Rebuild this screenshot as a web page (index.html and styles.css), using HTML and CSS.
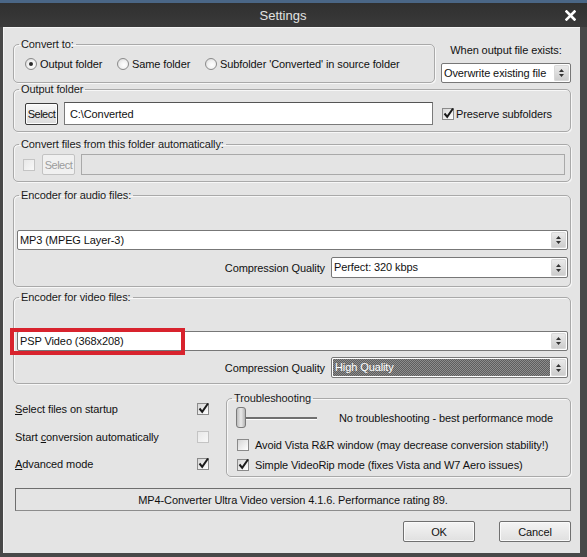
FILE: index.html
```html
<!DOCTYPE html>
<html>
<head>
<meta charset="utf-8">
<title>Settings</title>
<link rel="stylesheet" href="styles.css">
</head>
<body>
<div class="desk">
  <div class="window">
    <div class="titlebar">
      <span class="title">Settings</span>
      <span class="close"><svg width="11" height="11" viewBox="0 0 11 11"><path d="M1.5 1.5 L9.5 9.5 M9.5 1.5 L1.5 9.5" stroke="#fff" stroke-width="2.6" stroke-linecap="square"/></svg></span>
    </div>
    <div class="client">
      <div class="row-top">
        <fieldset class="group g-convert">
          <legend>Convert to:</legend>
          <div class="radios">
            <span class="opt w1"><span class="radio on"></span>Output folder</span>
            <span class="opt w2"><span class="radio"></span>Same folder</span>
            <span class="opt"><span class="radio"></span>Subfolder 'Converted' in source folder</span>
          </div>
        </fieldset>
        <div class="exists">
          <div class="exists-label">When output file exists:</div>
          <div class="combo c-exists"><span class="val">Overwrite existing file</span><span class="arrow"><svg width="7" height="10" viewBox="0 0 7 10"><path d="M3.5 1 L6 4 L1 4 Z M1 6 L6 6 L3.5 9 Z" fill="#333"/></svg></span></div>
        </div>
      </div>

      <fieldset class="group g-output">
        <legend>Output folder</legend>
        <div class="out-row">
          <span class="btn btn-select">Select</span>
          <span class="textbox tb-out">C:\Converted</span>
          <span class="cb on"><svg width="13" height="13" viewBox="0 0 13 13"><path d="M2.5 6.5 L5.2 9.8 L11 1.5" fill="none" stroke="#1a1a1a" stroke-width="2"/></svg></span>
          <span class="cb-label">Preserve subfolders</span>
        </div>
      </fieldset>

      <fieldset class="group g-auto">
        <legend>Convert files from this folder automatically:</legend>
        <div class="auto-row">
          <span class="cb dis"></span>
          <span class="btn btn-dis">Select</span>
          <span class="textbox tb-dis"></span>
        </div>
      </fieldset>

      <fieldset class="group g-enc">
        <legend>Encoder for audio files:</legend>
        <div class="enc-body">
          <div class="combo"><span class="val">MP3 (MPEG Layer-3)</span><span class="arrow"><svg width="7" height="10" viewBox="0 0 7 10"><path d="M3.5 1 L6 4 L1 4 Z M1 6 L6 6 L3.5 9 Z" fill="#333"/></svg></span></div>
          <div class="quality-row">
            <span class="q-label">Compression Quality</span>
            <div class="combo c-quality"><span class="val">Perfect: 320 kbps</span><span class="arrow"><svg width="7" height="10" viewBox="0 0 7 10"><path d="M3.5 1 L6 4 L1 4 Z M1 6 L6 6 L3.5 9 Z" fill="#333"/></svg></span></div>
          </div>
        </div>
      </fieldset>

      <fieldset class="group g-enc g-video">
        <legend>Encoder for video files:</legend>
        <div class="enc-body">
          <div class="combo-wrap">
            <div class="combo"><span class="val">PSP Video (368x208)</span><span class="arrow"><svg width="7" height="10" viewBox="0 0 7 10"><path d="M3.5 1 L6 4 L1 4 Z M1 6 L6 6 L3.5 9 Z" fill="#333"/></svg></span></div>
            <span class="highlight"></span>
          </div>
          <div class="quality-row">
            <span class="q-label">Compression Quality</span>
            <div class="combo c-quality c-focus"><span class="val">High Quality</span><span class="arrow"><svg width="7" height="10" viewBox="0 0 7 10"><path d="M3.5 1 L6 4 L1 4 Z M1 6 L6 6 L3.5 9 Z" fill="#333"/></svg></span></div>
          </div>
        </div>
      </fieldset>

      <div class="bottom">
        <div class="opts">
          <div class="opt-row"><span><u>S</u>elect files on startup</span><span class="cb on"><svg width="13" height="13" viewBox="0 0 13 13"><path d="M2.5 6.5 L5.2 9.8 L11 1.5" fill="none" stroke="#1a1a1a" stroke-width="2"/></svg></span></div>
          <div class="opt-row"><span>Start <u>c</u>onversion automatically</span><span class="cb dis"></span></div>
          <div class="opt-row"><span><u>A</u>dvanced mode</span><span class="cb on"><svg width="13" height="13" viewBox="0 0 13 13"><path d="M2.5 6.5 L5.2 9.8 L11 1.5" fill="none" stroke="#1a1a1a" stroke-width="2"/></svg></span></div>
        </div>
        <fieldset class="group g-trouble">
          <legend>Troubleshooting</legend>
          <div class="slider-row">
            <span class="thumb"></span>
            <span class="track"></span>
            <span class="slider-text">No troubleshooting - best performance mode</span>
          </div>
          <div class="t-row t-first"><span class="cb"></span><span>Avoid Vista R&amp;R window (may decrease conversion stability!)</span></div>
          <div class="t-row"><span class="cb on"><svg width="13" height="13" viewBox="0 0 13 13"><path d="M2.5 6.5 L5.2 9.8 L11 1.5" fill="none" stroke="#1a1a1a" stroke-width="2"/></svg></span><span>Simple VideoRip mode (fixes Vista and W7 Aero issues)</span></div>
        </fieldset>
      </div>

      <div class="status">MP4-Converter Ultra Video version 4.1.6. Performance rating 89.</div>

      <div class="buttons">
        <span class="btn btn-dlg">OK</span>
        <span class="btn btn-dlg">Cancel</span>
      </div>
    </div>
  </div>
</div>
</body>
</html>
```

FILE: styles.css
```css
html, body {
  margin: 0;
  padding: 0;
  width: 587px;
  height: 557px;
  overflow: hidden;
}

body {
  font-family: "Liberation Sans", Arial, sans-serif;
  font-size: 11px;
  letter-spacing: -0.1px;
  color: #111;
}

.desk {
  box-sizing: border-box;
  height: 557px;
  padding-top: 3px;
  background: #4a6686;
}

.window {
  height: 554px;
  display: flex;
  flex-direction: column;
  background: #484848;
}

.titlebar {
  height: 24px;
  flex: none;
  display: flex;
  align-items: center;
  background: linear-gradient(#303030, #3a3a3a);
}

.title {
  flex: 1;
  text-align: center;
  padding-left: 6px;
  font-size: 13px;
  letter-spacing: 0;
  color: #e2e2e2;
}

.close {
  width: 21px;
  margin-right: 6px;
  display: flex;
  justify-content: center;
  align-items: center;
}

.client {
  flex: 1;
  margin: 0 7px 4px 3px;
  background: #e4e4e4;
  padding: 11px 9px 0 10px;
  display: flex;
  flex-direction: column;
  box-shadow: inset 1px 1px 0 #f4f4f4;
}

/* group boxes */
.group {
  margin: 0;
  padding: 0;
  min-width: 0;
  border: 1px solid #a9a9a9;
  border-radius: 5px;
  box-shadow: inset 1px 1px 0 #f7f7f7, 1px 1px 0 #f7f7f7;
}

.group legend {
  margin-left: 5px;
  padding: 0 2px;
  line-height: 13px;
  height: 13px;
  color: #1a1a1a;
}

.row-top {
  display: flex;
  gap: 6px;
}

.g-convert {
  width: 422px;
  box-sizing: border-box;
}

.radios {
  display: flex;
  align-items: center;
  height: 14px;
  padding: 6px 0 8px 11px;
}

.opt {
  display: flex;
  align-items: center;
  gap: 3px;
  white-space: nowrap;
}

.w1 { width: 92px; }
.w2 { width: 88px; }

.radio {
  width: 12px;
  height: 12px;
  box-sizing: border-box;
  border: 1px solid #8a8a8a;
  border-radius: 50%;
  background: radial-gradient(circle at 60% 60%, #ffffff 0, #f2f2f2 45%, #d2d2d2 100%);
  display: flex;
  align-items: center;
  justify-content: center;
}

.radio.on::after {
  content: "";
  width: 4px;
  height: 4px;
  border-radius: 50%;
  background: #2a2a2a;
}

.exists {
  width: 130px;
  display: flex;
  flex-direction: column;
  align-items: center;
}

.exists-label {
  margin-top: 6px;
  line-height: 13px;
  white-space: nowrap;
}

.c-exists {
  margin-top: 6px;
  width: 130px;
}

/* combo boxes */
.combo {
  box-sizing: border-box;
  height: 20px;
  display: flex;
  background: #fff;
  border: 1px solid #777;
  border-radius: 2px;
}

.combo .val {
  flex: 1;
  padding-left: 2px;
  line-height: 18px;
  white-space: nowrap;
  overflow: hidden;
}

.combo .arrow {
  width: 15px;
  margin: 1px;
  border-radius: 2px;
  background: linear-gradient(#ececec, #cbcbcb);
  box-shadow: inset 0 0 0 1px #d8d8d8;
  display: flex;
  align-items: center;
  justify-content: center;
}

.c-focus .val {
  margin: 1px 0 1px 1px;
  line-height: 16px;
  color: #fff;
  background: repeating-conic-gradient(#5e5e5e 0 25%, #8c8c8c 0 50%) 0 0 / 2px 2px;
}

/* output folder */
.out-row {
  display: flex;
  align-items: center;
  height: 23px;
  padding: 6px 0 6px 11px;
}

.btn {
  box-sizing: border-box;
  display: flex;
  align-items: center;
  justify-content: center;
  white-space: nowrap;
}

.btn-select {
  width: 33px;
  height: 22px;
  letter-spacing: -0.5px;
  border: 1px solid #3c3c3c;
  border-radius: 2px;
  background: linear-gradient(#f8f8f8, #dadada);
  box-shadow: inset 0 0 0 1px #fdfdfd;
}

.textbox {
  box-sizing: border-box;
  display: flex;
  align-items: center;
  background: #fff;
  border: 1px solid #7a7a7a;
  border-top-color: #555;
}

.tb-out {
  width: 369px;
  height: 23px;
  margin-left: 6px;
  padding-left: 5px;
}

.cb {
  box-sizing: border-box;
  width: 12px;
  height: 12px;
  flex: none;
  border: 1px solid #8a8a8a;
  background: linear-gradient(135deg, #d6d6d6, #ffffff);
  position: relative;
}

.cb svg {
  position: absolute;
  left: -1px;
  top: -2px;
}

.cb.dis {
  border-color: #c4c4c4;
  background: linear-gradient(135deg, #e8e8e8, #f8f8f8);
}

.out-row .cb {
  margin-left: 9px;
}

.cb-label {
  margin-left: 2px;
  white-space: nowrap;
}

/* auto folder */
.g-auto {
  margin-top: 6px;
}

.auto-row {
  display: flex;
  align-items: center;
  height: 21px;
  padding: 3px 5px 6px 9px;
}

.btn-dis {
  width: 33px;
  height: 21px;
  margin-left: 7px;
  letter-spacing: -0.5px;
  color: #9c9c9c;
  border: 1px solid #c2c2c2;
  border-radius: 2px;
  background: #f0f0f0;
}

.tb-dis {
  flex: 1;
  height: 21px;
  margin-left: 6px;
  background: #e4e4e4;
  border: 1px solid #a9a9a9;
}

/* encoders */
.g-enc {
  margin-top: 7px;
}

.g-video {
  margin-top: 4px;
}

.enc-body {
  padding: 28px 2px 8px 3px;
  display: flex;
  flex-direction: column;
}

.g-video .enc-body {
  padding-top: 27px;
  padding-bottom: 5px;
}

.quality-row {
  margin-top: 7px;
  display: flex;
  align-items: center;
  justify-content: flex-end;
  gap: 6px;
}

.g-video .quality-row {
  margin-top: 6px;
}

.q-label {
  white-space: nowrap;
}

.c-quality {
  width: 237px;
  height: 21px;
}

.c-quality .val {
  line-height: 19px;
}

.c-quality.c-focus .val {
  line-height: 17px;
}

.combo-wrap {
  position: relative;
}

.highlight {
  position: absolute;
  left: -7px;
  top: -3px;
  width: 175px;
  height: 27px;
  box-sizing: border-box;
  border: 4px solid #d8232d;
}

/* bottom */
.bottom {
  margin-top: 8px;
  display: flex;
}

.opts {
  width: 213px;
  flex: none;
  box-sizing: border-box;
  padding: 10px 0 0 2px;
  display: flex;
  flex-direction: column;
  gap: 14px;
}

.opt-row {
  width: 194px;
  height: 14px;
  display: flex;
  align-items: center;
  justify-content: space-between;
  white-space: nowrap;
}

.opt-row + .opt-row + .opt-row {
  margin-top: -1px;
}

.g-trouble {
  flex: 1;
  padding-bottom: 5px;
}

.slider-row {
  display: flex;
  align-items: center;
  height: 21px;
  margin-top: 2px;
  padding-left: 9px;
}

.thumb {
  box-sizing: border-box;
  width: 10px;
  height: 21px;
  border: 1px solid #7a7a7a;
  border-radius: 3px;
  background: linear-gradient(90deg, #bdbdbd, #e9e9e9 50%, #b5b5b5);
}

.track {
  width: 71px;
  height: 2px;
  background: #6f6f6f;
  box-shadow: 0 1px 0 #ffffff;
}

.slider-text {
  margin-left: 22px;
  white-space: nowrap;
}

.t-row {
  display: flex;
  align-items: center;
  gap: 6px;
  height: 12px;
  margin-top: 8px;
  padding-left: 10px;
  white-space: nowrap;
}

.t-row.t-first {
  margin-top: 11px;
}

/* status */
.status {
  margin: 11px 0 0 2px;
  height: 23px;
  box-sizing: border-box;
  border: 1px solid #6e6e6e;
  border-right-color: #8c8c8c;
  border-bottom-color: #8c8c8c;
  display: flex;
  align-items: center;
  justify-content: center;
  white-space: nowrap;
}

.buttons {
  margin-top: 10px;
  display: flex;
  justify-content: flex-end;
  gap: 24px;
}

.btn-dlg {
  width: 72px;
  height: 21px;
  border: 1px solid #707070;
  border-radius: 2px;
  background: linear-gradient(#f4f4f4, #e0e0e0);
  box-shadow: inset 0 0 0 1px #fafafa;
}
```
